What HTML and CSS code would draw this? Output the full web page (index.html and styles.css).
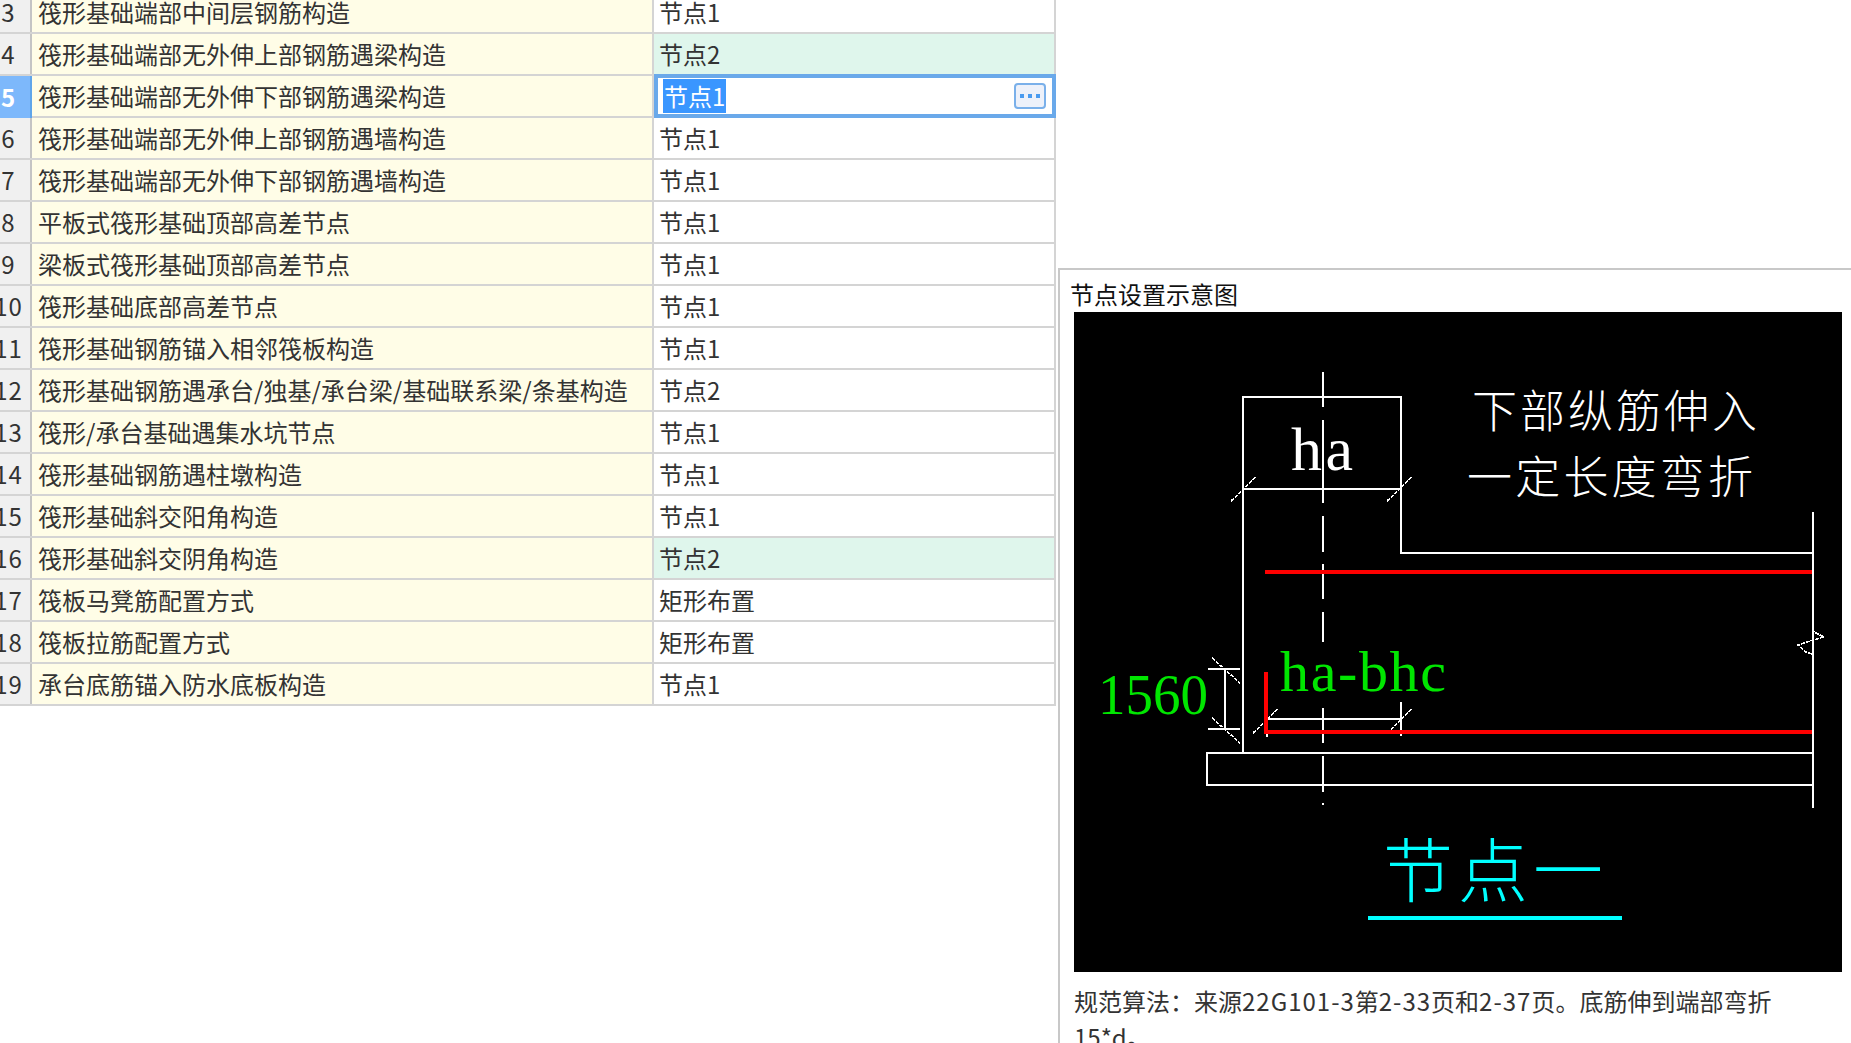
FILE: index.html
```html
<!DOCTYPE html>
<html lang="zh-CN">
  <head>
    <meta charset="UTF-8" />
    <title>节点设置</title>
    <link rel="stylesheet" href="styles.css">
  </head>
  <body>
    <div class="node-table">
      <div class="row"><div class="num">3</div><div class="name">筏形基础端部中间层钢筋构造</div><div class="value">节点1</div></div>
      <div class="row"><div class="num">4</div><div class="name">筏形基础端部无外伸上部钢筋遇梁构造</div><div class="value changed">节点2</div></div>
      <div class="row active"><div class="num">5</div><div class="name">筏形基础端部无外伸下部钢筋遇梁构造</div>
        <div class="value editor">
          <span class="selected">节点1</span>
          <span class="more-btn"><i></i><i></i><i></i></span>
        </div>
      </div>
      <div class="row"><div class="num">6</div><div class="name">筏形基础端部无外伸上部钢筋遇墙构造</div><div class="value">节点1</div></div>
      <div class="row"><div class="num">7</div><div class="name">筏形基础端部无外伸下部钢筋遇墙构造</div><div class="value">节点1</div></div>
      <div class="row"><div class="num">8</div><div class="name">平板式筏形基础顶部高差节点</div><div class="value">节点1</div></div>
      <div class="row"><div class="num">9</div><div class="name">梁板式筏形基础顶部高差节点</div><div class="value">节点1</div></div>
      <div class="row"><div class="num">10</div><div class="name">筏形基础底部高差节点</div><div class="value">节点1</div></div>
      <div class="row"><div class="num">11</div><div class="name">筏形基础钢筋锚入相邻筏板构造</div><div class="value">节点1</div></div>
      <div class="row"><div class="num">12</div><div class="name">筏形基础钢筋遇承台/独基/承台梁/基础联系梁/条基构造</div><div class="value">节点2</div></div>
      <div class="row"><div class="num">13</div><div class="name">筏形/承台基础遇集水坑节点</div><div class="value">节点1</div></div>
      <div class="row"><div class="num">14</div><div class="name">筏形基础钢筋遇柱墩构造</div><div class="value">节点1</div></div>
      <div class="row"><div class="num">15</div><div class="name">筏形基础斜交阳角构造</div><div class="value">节点1</div></div>
      <div class="row"><div class="num">16</div><div class="name">筏形基础斜交阴角构造</div><div class="value changed">节点2</div></div>
      <div class="row"><div class="num">17</div><div class="name">筏板马凳筋配置方式</div><div class="value">矩形布置</div></div>
      <div class="row"><div class="num">18</div><div class="name">筏板拉筋配置方式</div><div class="value">矩形布置</div></div>
      <div class="row"><div class="num">19</div><div class="name">承台底筋锚入防水底板构造</div><div class="value">节点1</div></div>
    </div>

    <div class="preview">
      <div class="preview-title">节点设置示意图</div>
      <!-- viewBox uses page coordinates so the drawing can be checked against the screenshot -->
      <svg class="diagram" viewBox="1074 312 768 660" width="768" height="660">
        <rect x="1074" y="312" width="768" height="660" fill="#000" />
        <g class="cad-white">
          <path d="M1243 753V397H1401V553H1813" />
          <path d="M1243 489H1401" />
          <path d="M1813 512V808" />
          <path d="M1207 753H1813M1207 785H1813M1207 752V786" />
          <path d="M1225 669V729M1208 669H1240M1208 729H1240" />
          <path d="M1267 706V737M1401 702V736M1267 719H1401" />
          <path d="M1323 372V407M1323 420V503M1323 516V552M1323 564V599M1323 612V642M1323 708V743M1323 752V754M1323 756V792M1323 803V805" />
        </g>
        <g class="cad-thin">
          <path d="M1231 501L1256 477M1387 501L1412 477" />
          <path d="M1212 658L1240 683M1212 718L1240 743" />
          <path d="M1253 733L1278 709M1387 733L1412 709" />
          <path d="M1812 654L1806 652L1798 645L1813 640L1824 637L1814 632" />
        </g>
        <g class="cad-red">
          <path d="M1265 572H1812" />
          <path d="M1266 672V732H1812" />
        </g>
        <text class="cad-latin white" x="1291" y="470" font-size="62" textLength="62">ha</text>
        <text class="cad-latin green" x="1280" y="691" font-size="58" textLength="166" lengthAdjust="spacing">ha-bhc</text>
        <text class="cad-latin green" x="1098" y="714" font-size="58" textLength="110" lengthAdjust="spacingAndGlyphs">1560</text>
        <text class="cad-cjk white" x="1472" y="428" font-size="45" textLength="285">下部纵筋伸入</text>
        <text class="cad-cjk white" x="1467" y="494" font-size="45" textLength="286">一定长度弯折</text>
        <text class="cad-cjk cyan" x="1383" y="897" font-size="70" textLength="220">节点一</text>
        <path class="cad-cyan" d="M1368 918H1622" />
      </svg>
      <p class="rule-note">规范算法：来源<span class="latin">22G101-3</span>第<span class="latin">2-33</span>页和<span class="latin">2-37</span>页。底筋伸到端部弯折15*d。</p>
    </div>
  </body>
</html>
```

FILE: styles.css
```css
html,
body {
  height: 1043px;
  overflow: hidden;
}

body {
  margin: 0;
  display: flex;
  align-items: flex-start;
  background-color: #fff;
  color: #333;
  font-family: "Noto Sans CJK SC", "Noto Sans", sans-serif;
  font-size: 24px;
}

/* left table */
.node-table {
  flex: none;
  width: 1056px;
  margin-top: -8px;
}

.row {
  display: grid;
  grid-template-columns: 32px 622px 402px;
  height: 42px;
  box-sizing: border-box;
  border-bottom: 2px solid #d4d4d4;
  white-space: nowrap;
}

.num,
.name,
.value {
  display: flex;
  align-items: center;
  box-sizing: border-box;
  height: 40px;
  padding-bottom: 2px;
}

.num {
  justify-content: center;
  padding-right: 13px;
  letter-spacing: 1px;
  background-color: #f0f0f0;
  border-right: 2px solid #c4c4c4;
}

.name {
  padding-left: 6px;
  background-color: #fffde7;
  border-right: 2px solid #d4d4d4;
}

.value {
  padding-left: 5px;
  border-right: 2px solid #d4d4d4;
}

.value.changed {
  background-color: #dff6ec;
}

.row.active .num {
  height: 42px;
  margin-bottom: -2px;
  background-color: #7db8fb;
  border-right-color: #5fa5ea;
  color: #fff;
  font-weight: 700;
}

.editor {
  justify-content: space-between;
  height: 44px;
  margin-top: -2px;
  padding: 0 6px 0 5px;
  border: 4px solid #6aa9ea;
  background-color: #fff;
}

.selected {
  padding: 0 1px;
  line-height: 34px;
  background-color: #3a96ff;
  color: #fff;
}

.more-btn {
  display: flex;
  justify-content: center;
  align-items: center;
  gap: 4px;
  box-sizing: border-box;
  width: 32px;
  height: 26px;
  background-color: #edf1fa;
  border: 2px solid #7ab0ea;
  border-radius: 4px;
}

.more-btn i {
  width: 4px;
  height: 4px;
  background-color: #4a9bf0;
}

/* right preview panel */
.preview {
  flex: none;
  width: 793px;
  height: 775px;
  box-sizing: border-box;
  margin: 268px 0 0 2px;
  padding-left: 10px;
  border-top: 2px solid #c8c8c8;
  border-left: 2px solid #c8c8c8;
}

.preview-title {
  height: 42px;
  line-height: 48px;
  color: #111;
}

.diagram {
  display: block;
  margin-left: 4px;
}

.cad-white path {
  fill: none;
  stroke: #fff;
  stroke-width: 2;
  shape-rendering: crispEdges;
}

.cad-thin path {
  fill: none;
  stroke: #fff;
  stroke-width: 1.5;
  stroke-dasharray: 4 1;
  shape-rendering: crispEdges;
}

.cad-red path {
  fill: none;
  stroke: #f00;
  stroke-width: 4;
  shape-rendering: crispEdges;
}

.cad-cyan {
  fill: none;
  stroke: #0ff;
  stroke-width: 4;
  shape-rendering: crispEdges;
}

.cad-latin {
  font-family: "Liberation Serif", serif;
}

.cad-cjk {
  font-family: "Noto Sans CJK SC", sans-serif;
  font-weight: 300;
}

.white {
  fill: #fff;
}

.green {
  fill: #00e600;
}

.cyan {
  fill: #0ff;
}

.rule-note {
  width: 720px;
  margin: 11px 0 0 4px;
  line-height: 36px;
}

.latin {
  letter-spacing: 1px;
}
```
